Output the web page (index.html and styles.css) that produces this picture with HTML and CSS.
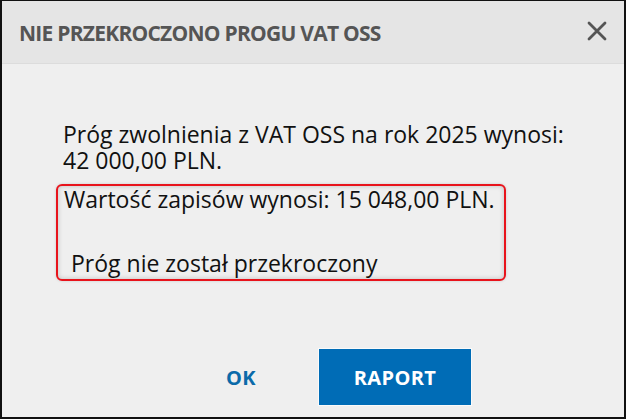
FILE: index.html
```html
<!DOCTYPE html>
<html lang="pl">
<head>
  <meta charset="UTF-8" />
  <title>Nie przekroczono progu VAT OSS</title>
  <link rel="stylesheet" href="styles.css">
</head>
<body>
  <div class="dialog">
    <!-- Header -->
    <div class="dialog-header">
      <h2 class="dialog-title">NIE PRZEKROCZONO PROGU VAT OSS</h2>
      <button class="close-btn" aria-label="Zamknij">
        <svg width="20" height="20" viewBox="0 0 20 20">
          <path d="M2 2 L18 18 M18 2 L2 18" stroke="#555" stroke-width="2.8" stroke-linecap="round" fill="none" />
        </svg>
      </button>
    </div>

    <!-- Content -->
    <div class="dialog-body">
      <p class="line">Próg zwolnienia z VAT OSS na rok 2025 wynosi:</p>
      <p class="line">42 000,00 PLN.</p>
      <div class="highlight">
        <p class="line gap">Wartość zapisów wynosi: 15 048,00 PLN.</p>
        <p class="line gap">&nbsp;</p>
        <p class="line status">Próg nie został przekroczony</p>
      </div>
    </div>

    <!-- Buttons -->
    <div class="dialog-footer">
      <button class="btn btn-link">OK</button>
      <button class="btn btn-primary">RAPORT</button>
    </div>
  </div>
</body>
</html>
```

FILE: styles.css
```css
html, body {
  margin: 0;
  padding: 0;
}

body {
  font-family: "Open Sans", "Noto Sans", sans-serif;
  background: #efefef;
}

.dialog {
  width: 626px;
  height: 419px;
  box-sizing: border-box;
  border: 2px solid #111;
  border-top-width: 1px;
  background: #efefef;
  display: flex;
  flex-direction: column;
}

.dialog-header {
  height: 63px;
  flex-shrink: 0;
  background: #e5e5e5;
  border-bottom: 1px solid #dcdcdc;
  display: flex;
  align-items: center;
  justify-content: space-between;
  padding: 2px 17px 0 17px;
  box-sizing: border-box;
}

.dialog-title {
  margin: 0;
  font-size: 21px;
  font-weight: 700;
  color: #555;
  letter-spacing: -0.75px;
}

.close-btn {
  background: none;
  border: none;
  padding: 0;
  margin-top: -4px;
  display: flex;
  cursor: pointer;
}

.dialog-body {
  flex: 1;
  padding: 57px 0 0 61px;
  color: #111;
  font-size: 23px;
}

.line {
  margin: 0;
  height: 26px;
  line-height: 26px;
  white-space: nowrap;
}

.line.gap {
  margin-bottom: 6px;
}

.highlight {
  margin: 11px 0 0 -7px;
  width: 450px;
  box-sizing: border-box;
  border: 2px solid #e8131b;
  border-radius: 6px;
  box-shadow: inset 0 0 5px rgba(0, 0, 0, 0.2), 0 0 3px rgba(0, 0, 0, 0.15);
  padding: 0 0 3px 6px;
}

.status {
  padding-left: 7px;
}

.dialog-footer {
  display: flex;
  justify-content: flex-end;
  align-items: center;
  padding: 0 153px 12px 0;
}

.btn {
  font-family: "Open Sans", "Noto Sans", sans-serif;
  font-size: 20px;
  font-weight: 700;
  letter-spacing: 0.4px;
  border: none;
  cursor: pointer;
}

.btn-link {
  background: none;
  color: #0b6aa9;
  width: 152px;
  height: 56px;
  margin-right: 2px;
}

.btn-primary {
  background: #006cb6;
  color: #fff;
  width: 152px;
  height: 56px;
  outline: 1px solid #fafafa;
}
```
